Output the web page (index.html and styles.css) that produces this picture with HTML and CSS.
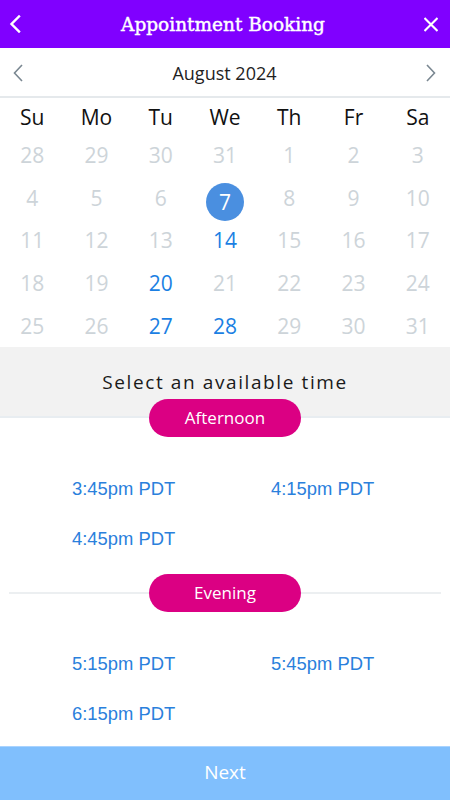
FILE: index.html
```html
<!DOCTYPE html>
<html lang="en">
<head>
<meta charset="utf-8">
<title>Appointment Booking</title>
<link rel="stylesheet" href="styles.css">
</head>
<body>
<div class="app">
  <header class="topbar">
    <button class="icon-btn" aria-label="Back">
      <svg width="12" height="18" viewBox="0 0 12 18"><path d="M10 1.5 L2.5 9 L10 16.5" fill="none" stroke="#fff" stroke-width="2.4" stroke-linecap="square"/></svg>
    </button>
    <h1 class="title">Appointment Booking</h1>
    <button class="icon-btn" aria-label="Close">
      <svg width="17" height="17" viewBox="0 0 17 17"><path d="M1.5 1.5 L15.5 15.5 M15.5 1.5 L1.5 15.5" fill="none" stroke="#fff" stroke-width="2.6" stroke-linecap="square"/></svg>
    </button>
  </header>

  <div class="month-nav">
    <button class="icon-btn" aria-label="Previous month">
      <svg width="12" height="18" viewBox="0 0 12 18"><path d="M10 1 L2.5 9 L10 17" fill="none" stroke="#7a8791" stroke-width="1.6"/></svg>
    </button>
    <div class="month">August 2024</div>
    <button class="icon-btn" aria-label="Next month">
      <svg width="12" height="18" viewBox="0 0 12 18"><path d="M2 1 L9.5 9 L2 17" fill="none" stroke="#7a8791" stroke-width="1.6"/></svg>
    </button>
  </div>

  <div class="calendar">
    <div class="wd">Su</div><div class="wd">Mo</div><div class="wd">Tu</div><div class="wd">We</div><div class="wd">Th</div><div class="wd">Fr</div><div class="wd">Sa</div>

    <div class="day">28</div><div class="day">29</div><div class="day">30</div><div class="day">31</div><div class="day">1</div><div class="day">2</div><div class="day">3</div>
    <div class="day">4</div><div class="day">5</div><div class="day">6</div><div class="day"><span class="sel">7</span></div><div class="day">8</div><div class="day">9</div><div class="day">10</div>
    <div class="day">11</div><div class="day">12</div><div class="day">13</div><div class="day avail">14</div><div class="day">15</div><div class="day">16</div><div class="day">17</div>
    <div class="day">18</div><div class="day">19</div><div class="day avail">20</div><div class="day">21</div><div class="day">22</div><div class="day">23</div><div class="day">24</div>
    <div class="day">25</div><div class="day">26</div><div class="day avail">27</div><div class="day avail">28</div><div class="day">29</div><div class="day">30</div><div class="day">31</div>
  </div>

  <div class="band">Select an available time</div>

  <div class="period period-first">
    <div class="pill">Afternoon</div>
  </div>
  <div class="times">
    <a class="time">3:45pm PDT</a>
    <a class="time">4:15pm PDT</a>
    <a class="time">4:45pm PDT</a>
  </div>

  <div class="period period-line">
    <span class="rule"></span>
    <div class="pill">Evening</div>
    <span class="rule"></span>
  </div>
  <div class="times">
    <a class="time">5:15pm PDT</a>
    <a class="time">5:45pm PDT</a>
    <a class="time">6:15pm PDT</a>
  </div>

  <button class="next">Next</button>
</div>
</body>
</html>
```

FILE: styles.css
```css
* { box-sizing: border-box; }

html, body {
  margin: 0;
  padding: 0;
  background: #ffffff;
}

body {
  font-family: "Open Sans", "Noto Sans", sans-serif;
  color: #222;
}

.app {
  width: 450px;
  height: 800px;
  display: flex;
  flex-direction: column;
  overflow: hidden;
}

.icon-btn {
  background: none;
  border: 0;
  padding: 0;
  display: flex;
  align-items: center;
  justify-content: center;
  cursor: pointer;
}

.topbar {
  height: 48px;
  background: #8000ff;
  display: flex;
  align-items: center;
  justify-content: space-between;
  padding: 0 12px 0 8px;
  flex: none;
}

.topbar .icon-btn { width: 14px; height: 24px; }

.title {
  margin: 0;
  color: #ffffff;
  font-family: "DejaVu Serif", "Liberation Serif", serif;
  font-weight: normal;
  font-size: 18.5px;
  -webkit-text-stroke: 0.45px #ffffff;
  letter-spacing: 0;
}

.month-nav {
  height: 50px;
  border-bottom: 2px solid #e5e9ec;
  display: flex;
  align-items: center;
  justify-content: space-between;
  padding: 2px 13px 0 12px;
  flex: none;
}

.month {
  font-size: 18px;
  color: #1f1f1f;
}

.calendar {
  display: grid;
  grid-template-columns: repeat(7, 1fr);
  grid-template-rows: 36px repeat(5, 42.6px);
  flex: none;
}

.wd {
  display: flex;
  align-items: center;
  justify-content: center;
  font-size: 21px;
  color: #111;
  padding-top: 2px;
}

.day {
  display: flex;
  align-items: center;
  justify-content: center;
  font-size: 21px;
  color: #cdd4d9;
}

.day.avail { color: #1b7fe3; }

.sel {
  width: 38px;
  height: 38px;
  border-radius: 50%;
  background: #4a8fe0;
  color: #ffffff;
  display: flex;
  align-items: center;
  justify-content: center;
  margin-top: 8px;
}

.band {
  height: 71px;
  background: #f2f2f2;
  border-bottom: 2px solid #e8edf1;
  display: flex;
  align-items: center;
  justify-content: center;
  padding-top: 2px;
  font-size: 19px;
  letter-spacing: 1.6px;
  color: #1a1a1a;
  flex: none;
}

.period {
  display: flex;
  align-items: center;
  justify-content: center;
  flex: none;
}

.period-first { margin-top: -19px; }

.period-line {
  padding: 0 9px;
  margin-top: 10px;
}

.rule {
  flex: 1;
  height: 2px;
  background: #eceff1;
}

.pill {
  width: 152px;
  height: 38px;
  border-radius: 19px;
  background: #db0083;
  color: #ffffff;
  font-size: 17px;
  display: flex;
  align-items: center;
  justify-content: center;
}

.times {
  display: grid;
  grid-template-columns: 199px 199px;
  grid-auto-rows: 50px;
  padding: 27px 0 0 72px;
  flex: none;
}

.time {
  font-family: "Liberation Sans", Arial, sans-serif;
  font-size: 18.4px;
  color: #2a80dc;
  line-height: 50px;
  cursor: pointer;
}

.next {
  margin-top: auto;
  height: 54px;
  border: 0;
  border-top: 1px solid #a9d3ff;
  background: #80bffd;
  color: #ffffff;
  font-family: "Open Sans", "Noto Sans", sans-serif;
  font-size: 19px;
  padding: 0 0 3px;
  flex: none;
  width: 100%;
}
```
